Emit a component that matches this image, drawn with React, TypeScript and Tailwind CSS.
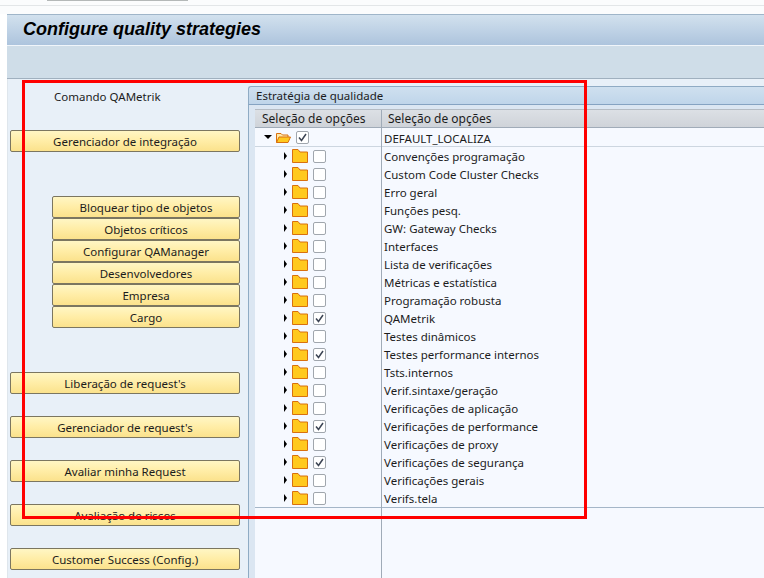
const FONT = "font-['Noto_Sans','DejaVu_Sans',sans-serif]";

const ITEMS = [
  { label: "Convenções programação", checked: false },
  { label: "Custom Code Cluster Checks", checked: false },
  { label: "Erro geral", checked: false },
  { label: "Funções pesq.", checked: false },
  { label: "GW: Gateway Checks", checked: false },
  { label: "Interfaces", checked: false },
  { label: "Lista de verificações", checked: false },
  { label: "Métricas e estatística", checked: false },
  { label: "Programação robusta", checked: false },
  { label: "QAMetrik", checked: true },
  { label: "Testes dinâmicos", checked: false },
  { label: "Testes performance internos", checked: true },
  { label: "Tsts.internos", checked: false },
  { label: "Verif.sintaxe/geração", checked: false },
  { label: "Verificações de aplicação", checked: false },
  { label: "Verificações de performance", checked: true },
  { label: "Verificações de proxy", checked: false },
  { label: "Verificações de segurança", checked: true },
  { label: "Verificações gerais", checked: false },
  { label: "Verifs.tela", checked: false },
];

const SUB_BUTTONS = [
  "Bloquear tipo de objetos",
  "Objetos críticos",
  "Configurar QAManager",
  "Desenvolvedores",
  "Empresa",
  "Cargo",
];

function SapButton({ label, className }: { label: string; className: string }) {
  return (
    <div
      className={`h-[22px] pt-[1px] flex items-center justify-center rounded-[2px] border border-[#7b7660] bg-gradient-to-b from-[#fff6c4] via-[#ffeda6] to-[#fbe28c] text-[11.5px] text-[#1c1c1c] ${className}`}
    >
      {label}
    </div>
  );
}

function Checkbox({ checked }: { checked: boolean }) {
  return (
    <div className="w-[13px] h-[13px] rounded-[2px] border border-[#a0a6ad] bg-white flex items-center justify-center">
      {checked && (
        <svg width="9" height="9" viewBox="0 0 9 9">
          <path d="M1 4.5 L3.5 7.5 L8 1" fill="none" stroke="#3c4454" strokeWidth="1.5" />
        </svg>
      )}
    </div>
  );
}

function Folder({ open }: { open?: boolean }) {
  if (open) {
    return (
      <svg width="16" height="13" viewBox="0 0 16 13">
        <path d="M1.5 11.5 V2.5 H6 L7.5 4 H13 V6" fill="#ffe9a8" stroke="#d9700f" />
        <path d="M1.5 11.5 L4 6 H15.5 L13 11.5 Z" fill="#ffc91e" stroke="#d9700f" />
      </svg>
    );
  }
  return (
    <svg width="16" height="14" viewBox="0 0 16 14">
      <path d="M0.5 13.5 V0.5 H6 L8 3 H15.5 V13.5 Z" fill="#ffc91e" stroke="#d9700f" />
    </svg>
  );
}

function TreeRow({ label, checked }: { label: string; checked: boolean }) {
  return (
    <div className="flex h-[18px] items-center">
      <div className="w-[126px] shrink-0 flex items-center pl-[29px]">
        <div className="w-0 h-0 border-y-[4px] border-y-transparent border-l-[3px] border-l-black" />
        <div className="ml-[5px] flex">
          <Folder />
        </div>
        <div className="ml-[5px]">
          <Checkbox checked={checked} />
        </div>
      </div>
      <div className="pl-[3px] pt-[1px] text-[11.5px] text-[#1c1c1c] whitespace-nowrap">{label}</div>
    </div>
  );
}

export default function App() {
  return (
    <div className={`relative w-[764px] h-[578px] overflow-hidden bg-white ${FONT}`}>
      {/* Top strip of the host window */}
      <div className="h-[14px] bg-[#fbfcfd]">
        <div className="h-[1px] ml-[47px] w-[141px] bg-[#b4b8b8]" />
        <div className="h-[4px]" />
        <div className="h-[1px] bg-[#e3e6e8]" />
      </div>

      <div className="ml-[7px] flex flex-col h-[564px] bg-[#e8f0f8]">
        {/* Title */}
        <div className="h-[32px] shrink-0 flex items-center pb-[3px] pl-[16px] border-t border-t-[#9fb5c9] border-b border-b-[#f0f5fa] bg-gradient-to-b from-[#d2e1ee] to-[#adc4dd] text-[18px] leading-none font-bold italic text-black font-['Liberation_Sans',sans-serif]">
          Configure quality strategies
        </div>
        {/* Toolbar */}
        <div className="h-[33px] shrink-0 bg-[#cfdde8] border-b border-b-[#a0b0bf]" />

        <div className="flex flex-1 min-h-0 border-l border-l-[#dfe6ec]">
          {/* Left buttons */}
          <div className="w-[240px] shrink-0 flex flex-col pl-[2px] pt-[9px]">
            <div className="h-[18px] pl-[44px] flex items-center text-[11.5px] text-[#1c1c1c]">Comando QAMetrik</div>
            <SapButton label="Gerenciador de integração" className="mt-[24px] w-[230px]" />
            <div className="mt-[44px] ml-[42px] w-[188px] flex flex-col">
              {SUB_BUTTONS.map((label) => (
                <SapButton key={label} label={label} className="w-full" />
              ))}
            </div>
            <SapButton label="Liberação de request's" className="mt-[44px] w-[230px]" />
            <SapButton label="Gerenciador de request's" className="mt-[22px] w-[230px]" />
            <SapButton label="Avaliar minha Request" className="mt-[22px] w-[230px]" />
            <SapButton label="Avaliação de riscos" className="mt-[22px] w-[230px]" />
            <SapButton label="Customer Success (Config.)" className="mt-[22px] w-[230px]" />
          </div>

          {/* Panel */}
          <div className="flex-1 min-w-0 mt-[7px] flex flex-col">
            <div className="h-[19px] shrink-0 pl-[7px] flex items-center rounded-tl-[3px] border-t border-l border-b border-t-[#8fabc4] border-l-[#8fabc4] border-b-[#85a3c2] bg-gradient-to-b from-[#cfe0ef] to-[#bfd5ea] text-[11.5px] text-[#1c1c1c]">
              Estratégia de qualidade
            </div>
            <div className="flex-1 min-h-0 flex bg-[#dbe6f2] border-l border-l-[#8fabc4] pl-[6px] pt-[4px]">
              <div className="flex-1 min-w-0 flex flex-col bg-[#f6f9ff]">
                {/* Column headers */}
                <div className="h-[19px] shrink-0 flex border-t border-t-[#b5bcc4] border-b border-b-[#a0abb8] bg-gradient-to-b from-[#dce0e5] to-[#cfd3d9] text-[12px] text-[#1c1c1c]">
                  <div className="w-[127px] shrink-0 pl-[7px] flex items-center border-r border-r-[#a0abb8]">Seleção de opções</div>
                  <div className="pl-[6px] flex items-center">Seleção de opções</div>
                </div>

                <div className="relative flex-1 min-h-0">
                  {/* Column divider */}
                  <div className="absolute left-[126px] top-0 bottom-0 w-[1px] bg-[#a0abb8]" />

                  {/* Root row */}
                  <div className="flex h-[19px] items-center border-b border-b-[#cdd6e0]">
                    <div className="w-[126px] shrink-0 flex items-center pl-[9px]">
                      <div className="w-0 h-0 border-x-[4px] border-x-transparent border-t-[4px] border-t-black" />
                      <div className="ml-[3px] flex">
                        <Folder open />
                      </div>
                      <div className="ml-[5px]">
                        <Checkbox checked />
                      </div>
                    </div>
                    <div className="pl-[3px] pt-[3px] text-[11.5px] text-[#1c1c1c]">DEFAULT_LOCALIZA</div>
                  </div>

                  {ITEMS.map((item) => (
                    <TreeRow key={item.label} label={item.label} checked={item.checked} />
                  ))}
                  <div className="h-[1px] bg-[#a5b6c8]" />
                </div>
              </div>
            </div>
          </div>
        </div>
      </div>

      {/* Red highlight drawn over the screenshot */}
      <div className="absolute left-[22px] top-[80px] w-[565px] h-[439px] border-[3px] border-[#ff0000] pointer-events-none" />
    </div>
  );
}
